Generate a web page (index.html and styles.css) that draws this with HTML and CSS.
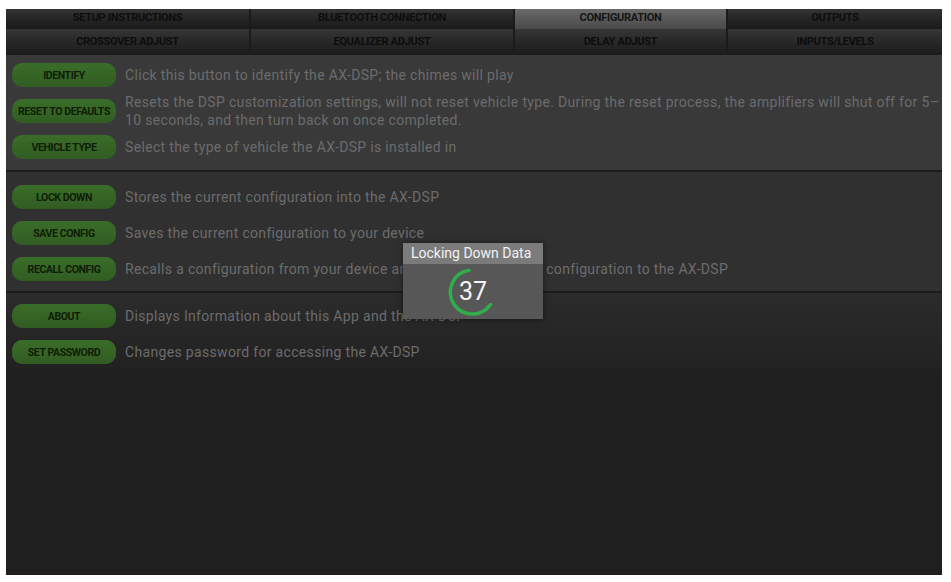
FILE: index.html
```html
<!DOCTYPE html>
<html lang="en">
<head>
    <meta charset="UTF-8">
    <meta name="viewport" content="width=device-width, initial-scale=1.0">
    <title>AX-DSP Configuration</title>
    <link rel="stylesheet" href="styles.css">
</head>
<body>
    <div class="app">
        <div class="tabs">
            <div class="tab row1">SETUP INSTRUCTIONS</div>
            <div class="tab row1">BLUETOOTH CONNECTION</div>
            <div class="tab row1 active">CONFIGURATION</div>
            <div class="tab row1">OUTPUTS</div>
            <div class="tab row2">CROSSOVER ADJUST</div>
            <div class="tab row2">EQUALIZER ADJUST</div>
            <div class="tab row2">DELAY ADJUST</div>
            <div class="tab row2">INPUTS/LEVELS</div>
        </div>

        <div class="section s1">
            <div class="item">
                <button class="btn">IDENTIFY</button>
                <p class="desc">Click this button to identify the AX-DSP; the chimes will play</p>
            </div>
            <div class="item">
                <button class="btn">RESET TO DEFAULTS</button>
                <p class="desc">Resets the DSP customization settings, will not reset vehicle type. During the reset process, the amplifiers will shut off for 5–10 seconds, and then turn back on once completed.</p>
            </div>
            <div class="item">
                <button class="btn">VEHICLE TYPE</button>
                <p class="desc">Select the type of vehicle the AX-DSP is installed in</p>
            </div>
        </div>

        <div class="section s2">
            <div class="item">
                <button class="btn">LOCK DOWN</button>
                <p class="desc">Stores the current configuration into the AX-DSP</p>
            </div>
            <div class="item">
                <button class="btn">SAVE CONFIG</button>
                <p class="desc">Saves the current configuration to your device</p>
            </div>
            <div class="item">
                <button class="btn">RECALL CONFIG</button>
                <p class="desc">Recalls a configuration from your device and sends the selected configuration to the AX-DSP</p>
            </div>
        </div>

        <div class="section s3">
            <div class="item">
                <button class="btn">ABOUT</button>
                <p class="desc">Displays Information about this App and the AX-DSP</p>
            </div>
            <div class="item">
                <button class="btn">SET PASSWORD</button>
                <p class="desc">Changes password for accessing the AX-DSP</p>
            </div>
        </div>

        <div class="dialog">
            <div class="dialog-title">Locking Down Data</div>
            <div class="dialog-body">
                <div class="ring">
                    <svg width="52" height="52" viewBox="0 0 52 52">
                        <!-- arc from just left of top, round the left side, to lower right -->
                        <path d="M22 4.3 A22 22 0 1 0 43.5 38.5" fill="none" stroke="#2fae4a" stroke-width="3.5" stroke-linecap="round"/>
                    </svg>
                    <span class="count">37</span>
                </div>
            </div>
        </div>
    </div>
</body>
</html>
```

FILE: styles.css
```css
body {
    margin: 0;
    padding: 0;
    background: #ffffff;
    font-family: Roboto, "Liberation Sans", sans-serif;
}

.app {
    position: relative;
    margin: 9px 9px 0 6px;
    height: 566px;
    background: #1f1f1f;
    overflow: hidden;
}

/* tab strip */
.tabs {
    display: grid;
    grid-template-columns: 245px 264px 213px 214px;
    grid-template-rows: 20px 26px;
}
.tab {
    display: flex;
    align-items: center;
    justify-content: center;
    font-size: 11px;
    font-weight: bold;
    letter-spacing: -0.3px;
    color: #0d0d0d;
    background: linear-gradient(#353535, #262626 45%, #1a1a1a);
    border-right: 2px solid #1b1b1b;
}
.tab:nth-child(4n) {
    border-right: none;
}
.tab.row1 {
    padding-bottom: 3px;
}
.tab.row2 {
    padding-bottom: 1px;
    background: linear-gradient(#363636, #2a2a2a 40%, #1b1b1b);
}
.tab.active {
    color: #151515;
    background: linear-gradient(#6a6a6a, #5a5a5a 45%, #4a4a4a);
}

/* content sections */
.section {
    display: flex;
    flex-direction: column;
    padding: 2px 1px 4px 6px;
    border-bottom: 2px solid #1c1c1c;
}
.s1 {
    background: #393939;
    height: 109px;
}
.s2 {
    background: #303030;
    padding-top: 7px;
    height: 108px;
}
.s3 {
    background: linear-gradient(#2b2b2b, #242424 70%, #1f1f1f);
    padding-top: 5px;
    height: 76px;
    border-bottom: none;
}

.item {
    display: flex;
    align-items: center;
    gap: 9px;
    min-height: 36px;
}
.btn {
    flex: none;
    width: 104px;
    height: 24px;
    border: none;
    border-radius: 10px;
    background: linear-gradient(#3a6d29, #315c22);
    color: #0f1d07;
    font-family: Roboto, "Liberation Sans", sans-serif;
    font-size: 10.5px;
    font-weight: bold;
    letter-spacing: -0.4px;
    padding: 0;
    white-space: nowrap;
}
.desc {
    margin: 0;
    font-size: 14px;
    letter-spacing: 0.33px;
    line-height: 18px;
    color: #6c6c6c;
}

/* progress dialog */
.dialog {
    position: absolute;
    left: 397px;
    top: 234px;
    width: 140px;
    box-shadow: 0 0 6px rgba(0, 0, 0, 0.5);
}
.dialog-title {
    height: 21px;
    line-height: 21px;
    padding-left: 8px;
    background: #7b7b7b;
    color: #f2f2f2;
    font-size: 14px;
}
.dialog-body {
    height: 55px;
    background: #575757;
    display: flex;
    align-items: center;
    justify-content: center;
}
.ring {
    position: relative;
    width: 52px;
    height: 52px;
}
.count {
    position: absolute;
    left: 0;
    right: 0;
    top: 12px;
    text-align: center;
    color: #f4f4f4;
    font-size: 25px;
    line-height: 28px;
}
```
